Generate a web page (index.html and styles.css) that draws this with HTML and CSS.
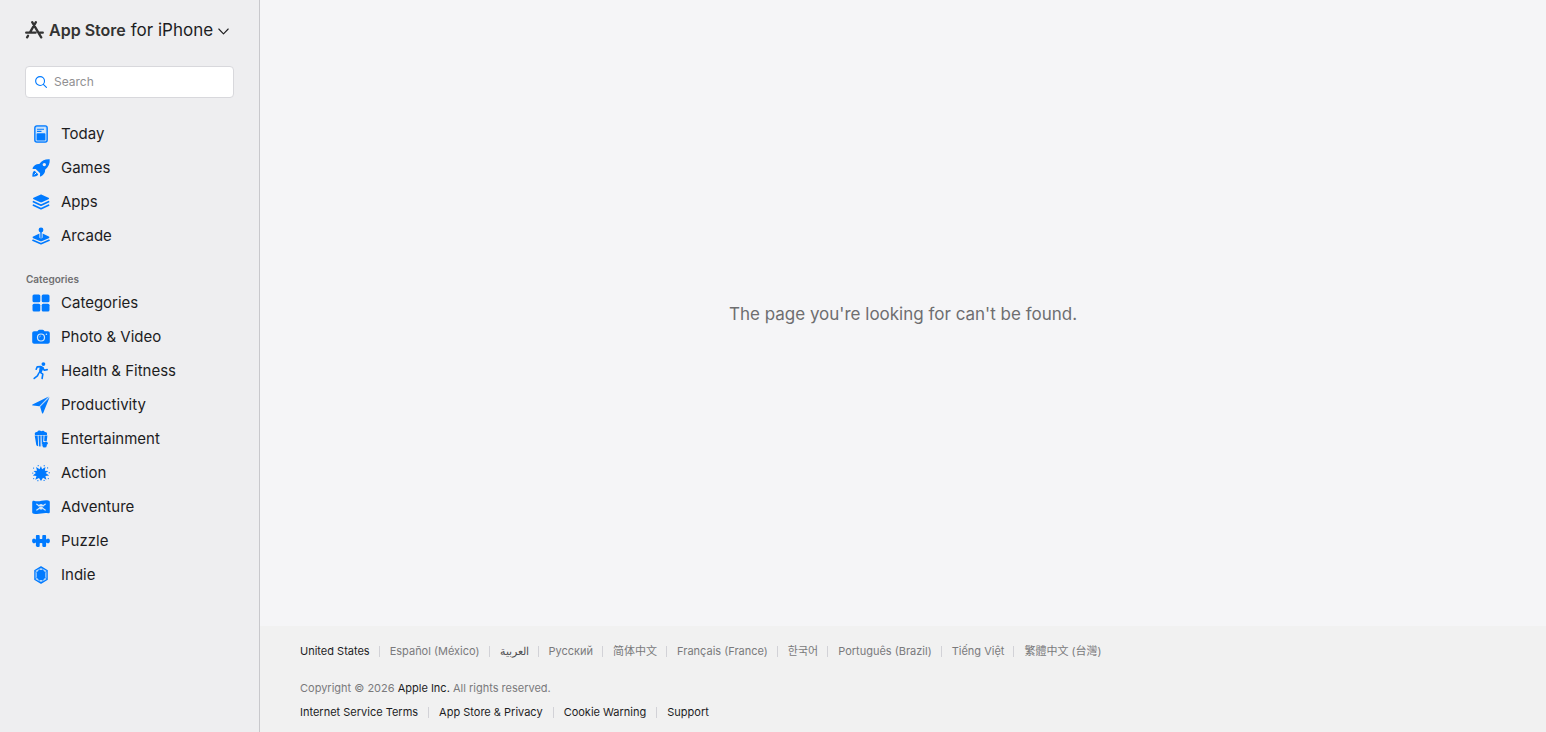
FILE: index.html
```html
<!DOCTYPE html>
<html lang="en-US">

<head>
  <meta charset="UTF-8" />
  <meta name="viewport" content="width=device-width, initial-scale=1.0" />
  <title>App Store</title>
  <link rel="stylesheet" href="styles.css">
</head>

<body>
  <div class="app">
    <nav class="sidebar">
      <button class="platform" type="button">
        <svg class="logo" viewBox="0 0 19 18" fill="none" stroke="currentColor" stroke-linecap="round" stroke-width="2.3">
          <path d="M7.2 1.2l9 15.2M10.9 1.2L5 11.3M3 14.800l-.9 1.500M1.200 11.700h9.400M14.800 11.700h3" />
        </svg>
        <span class="brand">App Store</span>
        <span class="device">for iPhone</span>
        <svg class="chevron" viewBox="0 0 11 7" fill="none" stroke="currentColor" stroke-width="1.1" stroke-linecap="round" stroke-linejoin="round">
          <path d="M.8 1l4.700 4.800L10.200 1" />
        </svg>
      </button>

      <form class="search" role="search">
        <svg viewBox="0 0 13 13" fill="none" stroke="currentColor" stroke-width="1.2" stroke-linecap="round">
          <circle cx="5.5" cy="5.5" r="4.8" />
          <path d="M9 9l3.400 3.400" />
        </svg>
        <input type="search" placeholder="Search" aria-label="Search">
      </form>

      <ul class="menu">
        <li><a href="#today">
          <svg viewBox="0 0 18 18">
            <rect x="2.800" y=".9" width="12.400" height="16.200" rx="2" fill="#9fcdfd" stroke="currentColor" stroke-width="1.300" />
            <rect x="4.200" y="2.300" width="9.600" height="13.400" rx=".8" fill="#d6e7f8" />
            <path d="M5 4.200h7M5 6.400h4.500" stroke="currentColor" stroke-width="1.100" />
            <rect x="4.600" y="8.300" width="8.800" height="7.200" rx=".8" />
          </svg>Today</a></li>
        <li><a href="#games">
          <svg viewBox="0 0 18 18">
            <path fill-rule="evenodd" d="M17.700.3c.3 4.200-1.100 7.600-4.600 10.400.1 2.700-.8 4.700-4.300 6.700-.5.200-.8 0-.8-.5l.1-2.600-4.400-4.400-2.600.1c-.6 0-.8-.4-.5-.9C2.200 5.700 4.400 4.700 7.300 4.900 10.100 1.400 13.500 0 17.700.300zM12.300 3.900a1.700 1.700 0 1 0 0 3.400 1.700 1.700 0 0 0 0-3.400z" />
            <path d="M2.700 11.800l3.500 3.500c-.4 1.500-2 2.300-5.400 2.400-.3 0-.5-.2-.5-.5.1-3.400.9-5 2.400-5.400z" />
            <path d="M2.500 15.500l1.900-1.900" stroke="#eeeef0" stroke-width="1" />
          </svg>Games</a></li>
        <li><a href="#apps">
          <svg viewBox="0 0 18 18">
            <path d="M8.300 1.700c.5-.2 1-.2 1.500 0l6.700 3.100c.8.400.8 1 0 1.400L9.800 9.300c-.5.200-1 .2-1.500 0L1.600 6.200c-.8-.4-.8-1 0-1.400z" />
            <path d="M1.500 8.800L9 12.200l7.500-3.400M1.500 12.300L9 15.700l7.500-3.400" fill="none" stroke="currentColor" stroke-width="1.800" stroke-linecap="round" stroke-linejoin="round" />
          </svg>Apps</a></li>
        <li><a href="#arcade">
          <svg viewBox="0 0 18 18">
            <circle cx="9" cy="3" r="2.400" />
            <path d="M9 5v5.500" stroke="currentColor" stroke-width="1.400" stroke-linecap="round" />
            <path d="M7.400 6.600v3.600c0 1.500 3.200 1.500 3.200 0V6.600l6.200 3c.8.400.8 1.200 0 1.600l-6.600 2.900c-.8.300-1.600.3-2.400 0l-6.600-2.900c-.8-.4-.8-1.200 0-1.600z" />
            <path d="M.9 13.300L9 16.800l8.100-3.500" fill="none" stroke="currentColor" stroke-width="1.500" stroke-linecap="round" stroke-linejoin="round" />
          </svg>Arcade</a></li>
      </ul>

      <h2 class="menu-title">Categories</h2>
      <ul class="menu">
        <li><a href="#categories">
          <svg viewBox="0 0 18 18">
            <rect x=".5" y=".5" width="7.800" height="7.800" rx="1.500" />
            <rect x="9.700" y=".5" width="7.800" height="7.800" rx="1.500" />
            <rect x=".5" y="9.700" width="7.800" height="7.800" rx="1.500" />
            <rect x="9.700" y="9.700" width="7.800" height="7.800" rx="1.500" />
          </svg>Categories</a></li>
        <li><a href="#photo-video">
          <svg viewBox="0 0 18 18">
            <path d="M5.500 3.200l.7-.9c.3-.4.700-.6 1.200-.6h3.200c.5 0 .9.200 1.200.6l.7.900h3.300c1.200 0 2 .8 2 2v8.600c0 1.200-.8 2-2 2H2.200c-1.200 0-2-.8-2-2V5.200c0-1.200.8-2 2-2z" />
            <circle cx="9" cy="9.500" r="3.500" fill="none" stroke="#d6e7f8" stroke-width="1.200" />
            <path d="M7.400 9.500A1.600 1.600 0 0 1 9 7.900" fill="none" stroke="#8dc2fc" stroke-width=".8" />
            <circle cx="14.400" cy="6.200" r=".8" fill="#d6e7f8" />
          </svg>Photo &amp; Video</a></li>
        <li><a href="#health-fitness">
          <svg viewBox="0 0 18 18">
            <circle cx="11.400" cy="2.100" r="1.900" />
            <path d="M4.200 7.200l1-2.300 3.500-.3M10.800 5.900l1.500 2.300 2.900-.6M8 10.200l2.800 2-.7 4.300M6.900 11l-1.500 2.900-3.200 2.500" fill="none" stroke="currentColor" stroke-width="1.600" stroke-linecap="round" stroke-linejoin="round" />
            <path d="M7.900 4.100c1.200-.3 3.200.2 3.900 1.500L9.700 10.500l-3 .5z" />
          </svg>Health &amp; Fitness</a></li>
        <li><a href="#productivity">
          <svg viewBox="0 0 18 18">
            <path d="M.5 8.500L16.700.4 7.300 10.200 1 9.600c-.8-.1-1-.7-.5-1.100zM17.600 1.300L11.200 17c-.3.700-.9.700-1.200 0l-1.900-6.200z" />
            <path d="M16.900 1L7.500 10.600" stroke="#7fbbfc" stroke-width=".5" />
          </svg>Productivity</a></li>
        <li><a href="#entertainment">
          <svg viewBox="0 0 18 18">
            <path d="M3 5C2.100 2.700 3.800 1.600 5.200 2 6.100.2 8.300.1 9.200 1.200c1.500-1.100 3.300-.4 3.600.9 1.700-.2 2.800 1.200 2.100 2.900z" />
            <path d="M2.700 5.500h3l.5 10.800c-1-.1-1.800-.6-2-1.700zM6.500 5.500h2.100v11.100c-.8 0-1.300-.1-1.500-.3zM9.500 5.500h2.100l-.3 5.300-1.400 5.800zM12.500 5.500h2.900l-.6 5.500h-2.600z" />
            <circle cx="11.600" cy="13.300" r="1.500" />
            <circle cx="14" cy="13.300" r="1.800" />
            <circle cx="12.600" cy="15.400" r="2.200" />
          </svg>Entertainment</a></li>
        <li><a href="#action">
          <svg viewBox="0 0 18 18">
            <path d="M8.900 2l1.200 3.300 3.300-2.200-.5 3.600 3.400.2-2.600 2.200 3.400 2.500-3.700.4 1 3.700-3.400-1.900L9 17.100l-2-3.200-3.700 1.900 1.200-3.800L.8 11.600l3.100-2.500-2.400-2.200 3.500-.2-.9-3.800 3.500 2.400z" />
            <path d="M6.200 1.600v.1M12.200 1.700v.1M15.600 3.800v.1M1.600 4v.1M17.200 8.700v.1M.8 9v.1M16.300 14.500v.1M1.700 14.500v.1M5.900 16.600v.1M12.100 16.400v.1" stroke="currentColor" stroke-width="1.200" stroke-linecap="round" />
          </svg>Action</a></li>
        <li><a href="#adventure">
          <svg viewBox="0 0 18 18">
            <path d="M.2 4.200c0-1 .7-1.700 1.700-1.400 5.400 1.700 8.800-1.400 14.300-.4 1 .2 1.600.8 1.600 1.700v9.800c0 1-.7 1.600-1.700 1.400-5.500-1-9 1.800-14.300.4-1-.2-1.600-.9-1.600-1.800z" />
            <path d="M4.800 6.200l8.400 5.800M13.200 6.200L4.800 12" stroke="#d6e7f8" stroke-width="1.200" stroke-linecap="round" />
            <path d="M6.700 8.300c0-3 4.600-3 4.600 0 0 1-.5 1.500-1 1.800v1.300H7.700v-1.300c-.5-.3-1-.8-1-1.800z" fill="#d6e7f8" />
            <circle cx="7.900" cy="8.500" r=".6" />
            <circle cx="10.100" cy="8.500" r=".6" />
          </svg>Adventure</a></li>
        <li><a href="#puzzle">
          <svg viewBox="0 0 18 18">
            <path d="M3.900 4.200c0-.8.4-1.200 1.100-1.200h1.600c.7 0 1.100.4 1.100 1.200v2.200c0 .7 2.600.7 2.600 0V4.200c0-.8.4-1.200 1.100-1.200H13c.7 0 1.100.4 1.100 1.200v3h.8c.8-1.200 3-.5 3 1.700s-2.200 3-3 1.800h-.8v3c0 .8-.4 1.200-1.100 1.200h-1.600c-.7 0-1.100-.4-1.100-1.200v-2.200c0-.7-2.600-.7-2.600 0v2.200c0 .8-.4 1.200-1.100 1.200H5c-.7 0-1.100-.4-1.100-1.200v-3h-.8c-.8 1.200-3 .4-3-1.800s2.200-2.900 3-1.700h.8z" />
          </svg>Puzzle</a></li>
        <li><a href="#indie">
          <svg viewBox="0 0 18 18">
            <path d="M9 .9l6.100 3.600v9L9 17.100l-6.100-3.600v-9z" fill="#b4d7fc" stroke="currentColor" stroke-width="1.300" stroke-linejoin="round" />
            <path d="M6.800 4h4.400l2.100 2.500v5L11.200 14H6.800l-2.100-2.500v-5z" />
            <path d="M6.800 4L9 1l2.200 3M4.700 6.500L3 4.700M13.300 6.500L15 4.700M4.700 11.500L3 13.300M13.300 11.500l1.700 1.800M6.800 14L9 17l2.200-3" fill="none" stroke="currentColor" stroke-width=".7" />
          </svg>Indie</a></li>
      </ul>
    </nav>

    <div class="page">
      <main class="error">
        <p>The page you're looking for can't be found.</p>
      </main>

      <footer class="footer">
        <ul class="links locales">
          <li><a class="current" href="#us">United States</a></li>
          <li><a href="#mx" lang="es">Español (México)</a></li>
          <li><a href="#ar" lang="ar">العربية</a></li>
          <li><a href="#ru" lang="ru">Русский</a></li>
          <li><a href="#cn" lang="zh-Hans">简体中文</a></li>
          <li><a href="#fr" lang="fr">Français (France)</a></li>
          <li><a href="#kr" lang="ko">한국어</a></li>
          <li><a href="#br" lang="pt">Português (Brazil)</a></li>
          <li><a href="#vi" lang="vi">Tiếng Việt</a></li>
          <li><a href="#tw" lang="zh-Hant">繁體中文 (台灣)</a></li>
        </ul>
        <p class="copyright">Copyright © 2026 <a href="#apple">Apple Inc.</a> All rights reserved.</p>
        <ul class="links">
          <li><a href="#terms">Internet Service Terms</a></li>
          <li><a href="#privacy">App Store &amp; Privacy</a></li>
          <li><a href="#cookies">Cookie Warning</a></li>
          <li><a href="#support">Support</a></li>
        </ul>
      </footer>
    </div>
  </div>
</body>

</html>
```
FILE: styles.css
```css
* {
  box-sizing: border-box;
}

body {
  margin: 0;
  font-family: Inter, "Noto Sans CJK SC", sans-serif;
  color: #1d1d1f;
  background: #f5f5f7;
}

ul,
p,
h2 {
  margin: 0;
  padding: 0;
  list-style: none;
}

a {
  color: inherit;
  text-decoration: none;
}

.app {
  display: flex;
  min-height: 100vh;
}

/* sidebar */
.sidebar {
  flex: 0 0 260px;
  min-width: 0;
  padding: 18px 25px;
  background: #eeeef0;
  border-right: 1px solid #c8c8cc;
}

.platform {
  display: flex;
  align-items: center;
  height: 24px;
  padding: 0;
  border: 0;
  background: none;
  font: inherit;
  font-size: 17px;
  color: #1d1d1f;
  white-space: nowrap;
  cursor: pointer;
}

.logo {
  width: 19px;
  height: 18px;
  margin-right: 5px;
  color: #333;
}

.brand {
  margin-right: 5px;
  font-size: 16px;
  font-weight: 600;
  color: #333;
}

.chevron {
  width: 11px;
  height: 7px;
  margin: 2px 0 0 5px;
}

.search {
  display: flex;
  align-items: center;
  gap: 7px;
  height: 32px;
  margin: 24px 0 19px;
  padding: 0 9px;
  background: #fff;
  border: 1px solid #d8d8dc;
  border-radius: 4px;
}

.search svg {
  flex: none;
  width: 12px;
  height: 12px;
  color: #007aff;
}

.search input {
  flex: 1;
  min-width: 0;
  padding: 0 0 2px;
  border: 0;
  outline: 0;
  background: none;
  font: inherit;
  font-size: 12px;
}

.search input::placeholder {
  color: #909092;
}

.menu a {
  display: flex;
  align-items: center;
  gap: 11px;
  height: 34px;
  padding: 0 0 2px 7px;
  font-size: 15px;
}

.menu svg {
  width: 18px;
  height: 18px;
  margin-top: 2px;
  color: #007aff;
  fill: currentColor;
}

.menu-title {
  margin-top: 20px;
  padding-left: 1px;
  font-size: 10px;
  font-weight: 600;
  line-height: 13px;
  color: #6e6e70;
}

/* content */
.page {
  flex: 1;
  display: flex;
  flex-direction: column;
}

.error {
  flex: 1;
  display: grid;
  place-items: center;
  padding-top: 2px;
  font-size: 17px;
  color: #6e6e70;
}

.footer {
  padding: 15px 40px 10px;
  background: #f1f1f1;
  font-size: 11px;
  line-height: 20px;
}

.links {
  display: flex;
  flex-wrap: wrap;
  column-gap: 10px;
}

.links li {
  display: flex;
  align-items: center;
  gap: 10px;
}

.links li + li::before {
  content: "";
  width: 1px;
  height: 11px;
  background: #d2d2d7;
}

.locales {
  column-gap: 9px;
  margin-bottom: 17px;
  color: #7a7a7c;
}

.locales .current,
.copyright a {
  color: #1d1d1f;
}

.copyright {
  margin-bottom: 4px;
  color: #7a7a7c;
}

:lang(ar) {
  color: #505052;
}

:lang(ko) {
  font-family: Inter, "Noto Sans CJK KR", sans-serif;
}

:lang(zh-Hant) {
  font-family: Inter, "Noto Sans CJK TC", sans-serif;
}
```
